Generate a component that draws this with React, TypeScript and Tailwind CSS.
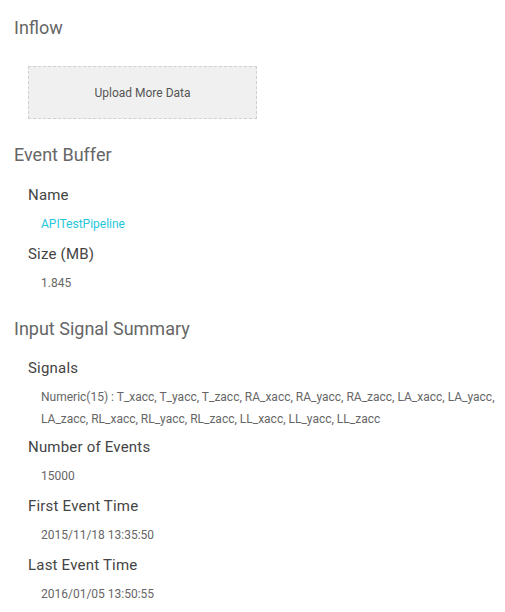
import React from "react";

const font = { fontFamily: "Roboto, 'Liberation Sans', sans-serif" };

function Heading({ children }: { children: React.ReactNode }) {
  return <div className="text-[18px] leading-[24px] text-[#666666]">{children}</div>;
}

function Item({
  label,
  children,
  tight,
}: {
  label: string;
  children: React.ReactNode;
  tight?: boolean;
}) {
  return (
    <div className={tight ? "pl-[14px] pb-[7px]" : "pl-[14px] pb-[9px]"}>
      <div className="text-[15px] leading-[20px] tracking-[0.2px] text-[#444444]">{label}</div>
      <div className="mt-[8px] pl-[13px] text-[12px] leading-[22px] text-[#666666]">{children}</div>
    </div>
  );
}

export default function App() {
  return (
    <div className="w-[505px] bg-white pl-[14px] pr-[3px] pt-[16px]" style={font}>
      <Heading>Inflow</Heading>
      <div className="ml-[14px] mt-[26px] flex h-[53px] w-[229px] items-center justify-center border border-dashed border-[#d0d0d0] bg-[#f0f0f0] text-[12px] text-[#555555]">
        Upload More Data
      </div>

      <div className="mt-[24px]">
        <Heading>Event Buffer</Heading>
        <div className="mt-[18px]">
          <Item label="Name">
            <span className="text-[#26c6da]">APITestPipeline</span>
          </Item>
          <Item label="Size (MB)">1.845</Item>
        </div>
      </div>

      <div className="mt-[14px]">
        <Heading>Input Signal Summary</Heading>
        <div className="mt-[17px]">
          <Item label="Signals" tight>
            Numeric(15) : T_xacc, T_yacc, T_zacc, RA_xacc, RA_yacc, RA_zacc, LA_xacc, LA_yacc, LA_zacc, RL_xacc, RL_yacc, RL_zacc, LL_xacc, LL_yacc, LL_zacc
          </Item>
          <Item label="Number of Events">15000</Item>
          <Item label="First Event Time">2015/11/18 13:35:50</Item>
          <Item label="Last Event Time">2016/01/05 13:50:55</Item>
        </div>
      </div>
    </div>
  );
}
